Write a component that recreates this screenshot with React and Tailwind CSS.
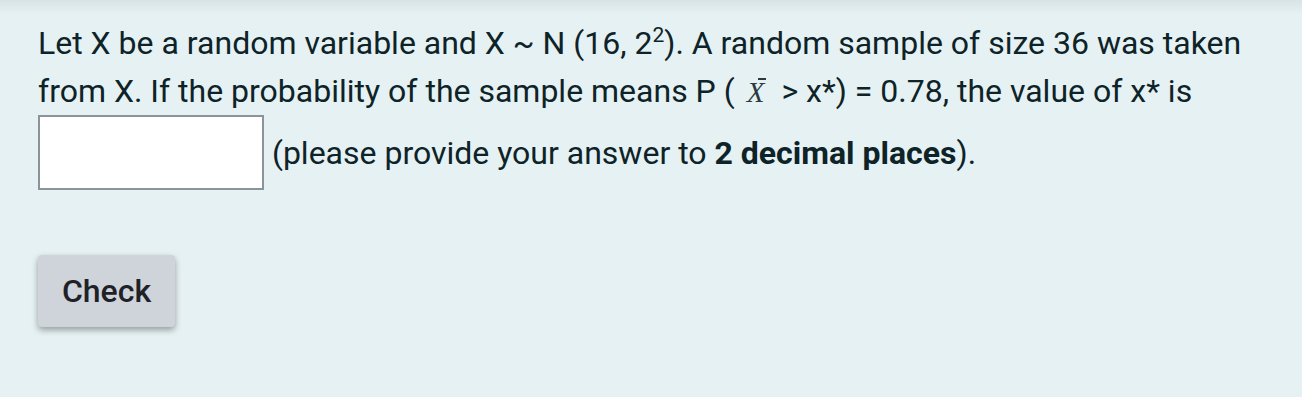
export default function App() {
  return (
    <div className="w-[1302px] h-[397px] bg-[#e6f1f3] bg-gradient-to-b from-[#d8e3e5] to-[#e6f1f3] to-[14px] font-['Roboto',sans-serif] text-[#0d2328]">
      <div className="pl-[38px] pt-[19px] text-[32px] leading-[48px]">
        <span>
          Let X be a random variable and X ~ N (16, 2
          <sup className="text-[21px] top-[-0.55em]">2</sup>). A random sample of size 36 was taken
        </span>
        <br />
        <span>
          from X. If the probability of the sample means P (
          <span className="relative inline-block ml-[12px] mr-[17px] font-['Liberation_Serif',serif] italic text-[29px] leading-[40px] text-[#2a3a3e]">
            X
            <span className="absolute left-[11px] top-[6px] h-[1.5px] w-[8px] bg-[#2a3a3e]" />
          </span>
          &gt; x*) = 0.78, the value of x* is
        </span>
        <br />
        <input
          type="text"
          className="inline-block align-middle h-[75px] w-[226px] border-2 border-[#8b949a] bg-white outline-none"
        />{" "}
        <span className="align-middle">
          (please provide your answer to <b className="font-bold">2 decimal places</b>).
        </span>
      </div>
      <div className="pl-[38px] pt-[65px]">
        <button
          type="button"
          className="h-[72px] w-[137px] rounded-[4px] bg-[#cfd3da] text-[32px] font-medium text-[#1e2227] shadow-[0_3px_6px_rgba(0,0,0,0.35)]"
        >
          Check
        </button>
      </div>
    </div>
  );
}
